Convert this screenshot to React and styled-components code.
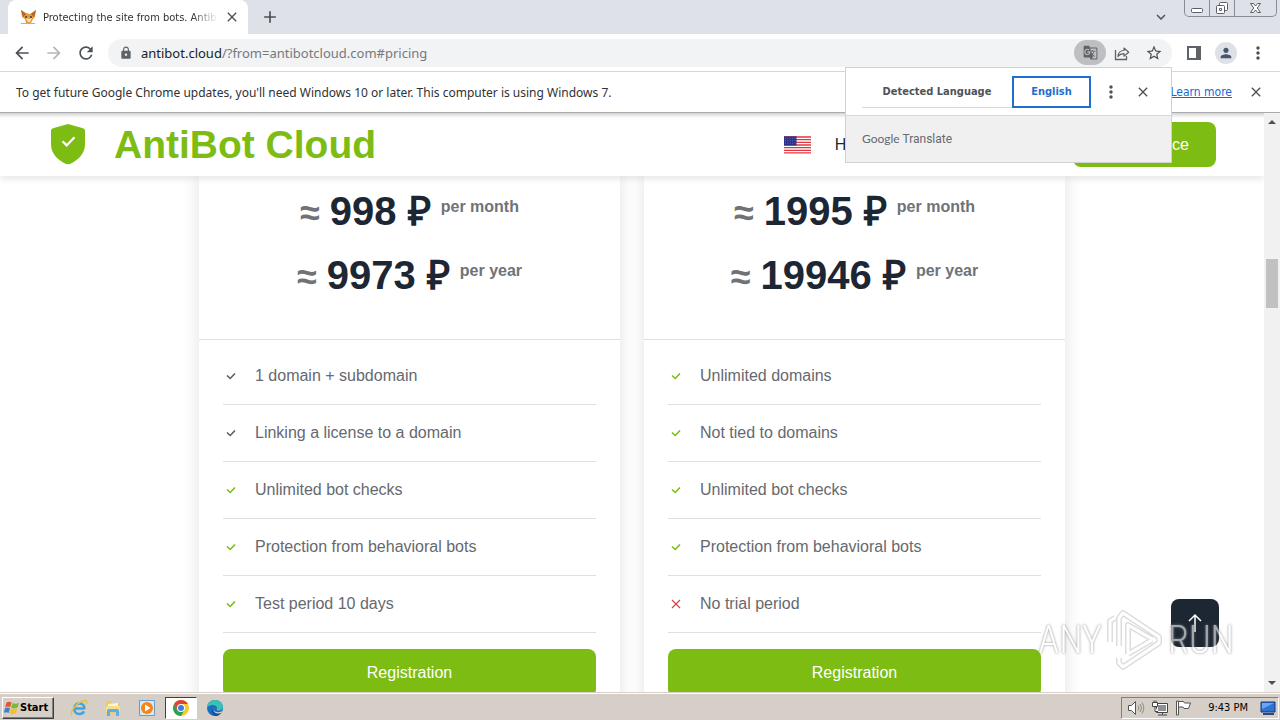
import React from 'react';

import styled, { createGlobalStyle } from 'styled-components';
import {
    MdArrowBack,
    MdArrowForward,
    MdRefresh,
    MdLock,
    MdGTranslate,
    MdStarBorder,
    MdClose,
    MdMoreVert,
    MdPerson,
    MdAdd,
    MdKeyboardArrowDown,
} from 'react-icons/md';

const plans = [
    {
        id: 'single',
        prices: [
            { amount: '998 ₽', period: 'per month' },
            { amount: '9973 ₽', period: 'per year' },
        ],
        features: [
            { text: '1 domain + subdomain', mark: 'plain' },
            { text: 'Linking a license to a domain', mark: 'plain' },
            { text: 'Unlimited bot checks', mark: 'yes' },
            { text: 'Protection from behavioral bots', mark: 'yes' },
            { text: 'Test period 10 days', mark: 'yes' },
        ],
    },
    {
        id: 'unlimited',
        prices: [
            { amount: '1995 ₽', period: 'per month' },
            { amount: '19946 ₽', period: 'per year' },
        ],
        features: [
            { text: 'Unlimited domains', mark: 'yes' },
            { text: 'Not tied to domains', mark: 'yes' },
            { text: 'Unlimited bot checks', mark: 'yes' },
            { text: 'Protection from behavioral bots', mark: 'yes' },
            { text: 'No trial period', mark: 'no' },
        ],
    },
];

const markColors = { plain: '#5a5d61', yes: '#7dbc12', no: '#d2433c' };

const FoxIcon = () => (
    <svg width='17' height='16' viewBox='0 0 17 16' aria-hidden='true'>
        <path d='M1 1l5 3 4 1 6-4-1 7-2 2-2 4H6l-1-4-3-2z' fill='#e59a3a' />
        <path d='M1 1l5 4-3 3zM16 1l-5 4 3 3z' fill='#b5642a' />
        <path d='M6 9l2 4h2l2-4-3 1z' fill='#f6e3cf' />
        <circle cx='6' cy='8' r='1' fill='#3c3c54' />
        <circle cx='11' cy='8' r='1' fill='#3c3c54' />
        <path d='M1 14h14v1H1z' fill='#b9a6c9' />
    </svg>
);

const ShareIcon = () => (
    <svg width='16' height='16' viewBox='0 0 16 16' fill='none' stroke='#5f6368' aria-hidden='true'>
        <path d='M1.500 5v9.500h11V11' strokeWidth='1.300' />
        <path d='M4 11.500c.3-4 2.500-6 6-6V3l4.700 4.200L10 11.200V8.700c-2.700 0-4.500.8-6 2.800z' strokeWidth='1.200' strokeLinejoin='round' />
    </svg>
);

const PanelIcon = () => (
    <svg width='14' height='14' viewBox='0 0 14 14' aria-hidden='true'>
        <path d='M1 1h12v12H1z' fill='#fff' stroke='#5f6368' strokeWidth='2' />
        <path d='M9 1h4v12H9z' fill='#5f6368' />
    </svg>
);

const ShieldIcon = () => (
    <svg width='34' height='41' viewBox='0 0 34 41' aria-hidden='true'>
        <path d='M17 0l15 4.300c1.300.4 2 1.200 2 2.600V20c0 9-5.500 14.500-13 19-2.800 1.700-5.200 1.700-8 0C5.500 34.500 0 29 0 20V6.900c0-1.400.7-2.200 2-2.600z' fill='#7dbc12' />
        <path d='M11.500 17.200l4.200 4.200 7.800-8.200' fill='none' stroke='#fff' strokeWidth='2.200' />
    </svg>
);

const UsFlag = () => (
    <svg width='27' height='18' viewBox='0 0 28 18' aria-label='English'>
        <path d='M0 0h28v18H0z' fill='#fff' />
        <path d='M0 .7h28M0 3.500h28M0 6.200h28M0 9h28M0 11.700h28M0 14.500h28M0 17.200h28' stroke='#e2343f' strokeWidth='1.400' />
        <path d='M0 0h13v9.500H0z' fill='#2b2f86' />
        <path d='M1 2h11M1 4.500h11M1 7h11' stroke='#7478c0' strokeDasharray='1 1.500' />
    </svg>
);

const FeatureMark = ({ mark }) => (
    <svg width='16' height='16' viewBox='0 0 16 16' fill='none' stroke={markColors[mark]} aria-hidden='true'>
        {mark === 'no' ? (
            <path d='M4 4l8 8M12 4l-8 8' strokeWidth='1.100' />
        ) : (
            <path d='M4 7.500L7.200 10.500 12 5.500' strokeWidth='1.600' />
        )}
    </svg>
);

const ArrowUp = () => (
    <svg width='16' height='20' viewBox='0 0 16 20' fill='none' stroke='#fff' strokeWidth='1.500' aria-hidden='true'>
        <path d='M8 19V2M2 8l6-6 6 6' />
    </svg>
);

const WindowsLogo = () => (
    <svg width='16' height='16' viewBox='0 0 16 16' aria-hidden='true'>
        <path d='M2.500 2.500c2-1.200 3.500-1 5 0L6.200 7.300c-1.600-1-3.200-1-5 0z' fill='#e4572a' />
        <path d='M8.400 3c2 1 4 1 6.600-.3L13.700 7.500c-2.300 1.100-4.500 1.200-6.600.2z' fill='#7cb93a' />
        <path d='M1 8.200c1.800-1 3.400-1 5 0L4.700 13c-1.600-1-3.200-1-5 0z' fill='#3f80d0' />
        <path d='M6.900 8.600c2.200 1 4.300.9 6.600-.2l-1.300 4.900c-2.300 1.100-4.500 1.200-6.600.2z' fill='#f6be2c' />
    </svg>
);

const IeIcon = () => (
    <svg width='18' height='18' viewBox='0 0 18 18' fill='none' aria-hidden='true'>
        <path d='M14.500 9.500H5M14.500 10c0-3.500-2.200-5.600-5-5.600A5.300 5.300 0 0 0 4.200 9.800C4.200 13 6.500 15 9.400 15c2 0 3.700-.9 4.600-2.600' stroke='#3fa4e0' strokeWidth='2.600' />
        <path d='M2 16.500C-1 13 7 3 14.500 1.500c3-.4 2.500 2 1.500 3.500' stroke='#ecc03c' strokeWidth='1.400' />
    </svg>
);

const FolderIcon = () => (
    <svg width='18' height='18' viewBox='0 0 18 18' aria-hidden='true'>
        <path d='M2 2h5l1 2h8v10H2z' fill='#ecca6a' />
        <path d='M4 5l10-1v6H4z' fill='#fff6cf' />
        <path d='M2 7h14v6H2z' fill='#f5dc90' />
        <path d='M3 17v-5c0-1 .5-2 2-2h8c1.500 0 2 1 2 2v5h-3v-4H6v4z' fill='#5fb0e0' />
    </svg>
);

const PlayerIcon = () => (
    <svg width='18' height='18' viewBox='0 0 18 18' aria-hidden='true'>
        <path d='M1.500 1.500h15v15h-15z' fill='#d6e9f7' stroke='#6c9cc4' />
        <circle cx='9' cy='9' r='6' fill='#f0861c' />
        <path d='M7 5.500L12.500 9 7 12.500z' fill='#fff' />
    </svg>
);

const ChromeIcon = () => (
    <svg width='16' height='16' viewBox='0 0 16 16' aria-hidden='true'>
        <circle cx='8' cy='8' r='8' fill='#f7c92c' />
        <path d='M1.100 4A8 8 0 0 0 8 16l3.500-6L8 8 4.500 10z' fill='#2c9f55' />
        <path d='M1.100 4A8 8 0 0 1 14.900 4H8L4.500 10z' fill='#dc4437' />
        <circle cx='8' cy='8' r='4' fill='#fff' />
        <circle cx='8' cy='8' r='3' fill='#3c7de0' />
    </svg>
);

const EdgeIcon = () => (
    <svg width='18' height='18' viewBox='0 0 18 18' aria-hidden='true'>
        <circle cx='9' cy='9' r='8' fill='#1b6fc2' />
        <path d='M1 8.500C1.500 3.500 5 1 9 1c5 0 8 3.500 8 6.500 0 3-2.500 4-4.500 4-1.500 0-2.500-.5-1.500-1.500C12 8 9 5.500 6 6 3.500 6.300 1.500 7.500 1 8.500z' fill='#3cc0b4' />
        <path d='M6.500 9c-.5 4 3 6.500 8.500 4.700C13 16.500 11 17 9.500 17 6 16 4.500 12 6.500 9z' fill='#124f9c' />
        <path d='M8.500 8.500c-1.500 1.800-.5 5 4 4.700 1.500 0 3-.7 3.500-1.200l-.5 1.700c-5 2-9.500-.5-7-5.200z' fill='#d6cfc7' />
    </svg>
);

const SpeakerIcon = () => (
    <svg width='18' height='16' viewBox='0 0 18 16' fill='none' stroke='#555' aria-hidden='true'>
        <path d='M1.500 5.500h3l4-4v13l-4-4h-3z' fill='#fff' />
        <path d='M11 5.500c1 1.500 1 3.500 0 5M13 4c1.700 2.500 1.700 5.500 0 8M15 2.500c2.300 3.500 2.300 7.500 0 11' stroke='#888' />
    </svg>
);

const NetworkIcon = () => (
    <svg width='16' height='16' viewBox='0 0 16 16' fill='none' stroke='#444' aria-hidden='true'>
        <path d='M4.500 3.500h11v9h-11z' fill='#fff' />
        <path d='M6 5h8v6H6z' fill='#8d9097' stroke='none' />
        <path d='M10.500 12.500v2M6 15h9' />
        <path d='M.5 2.500h5v4h-5zM2 2.500V.5M4 2.500V.5M3 6.500v5h3' fill='#fff' />
    </svg>
);

const TrayFlag = () => (
    <svg width='17' height='16' viewBox='0 0 17 16' fill='#fff' stroke='#555' aria-hidden='true'>
        <path d='M3.500 1.500h5l1 1.500h6l-2 5.500H9L8 7H3.500z' />
        <path d='M1.500 1h2v14h-2z' />
    </svg>
);

const DesktopIcon = () => (
    <svg width='16' height='16' viewBox='0 0 16 16' aria-hidden='true'>
        <path d='M1 2h14v10H1z' fill='#2d72d4' stroke='#18396e' />
        <path d='M2 3h12L2 9z' fill='#6aa7f0' />
        <path d='M3 13h11v2H3z' fill='#2b4a7c' />
    </svg>
);

const playPath = 'M13 38V10l4-5 36 24v6L17 59l-4-4v-5M4 34V13l5-3M22 46V17l24 14M22 46l24-14';

const App = () => {
    return (
        <Desktop>
            <GlobalStyle />
            <TabStrip>
                <Tab>
                    <FoxIcon />
                    <TabTitle>Protecting the site from bots. Antibot</TabTitle>
                    <IconButton aria-label='Close tab' $size={16}><MdClose /></IconButton>
                </Tab>
                <IconButton aria-label='New tab' $size={20}><MdAdd /></IconButton>
                <WindowControls>
                    <IconButton aria-label='Search tabs' $size={18}><MdKeyboardArrowDown /></IconButton>
                    <WindowButtons>
                        <WindowButton aria-label='Minimize' $width={24}>
                            <svg width='14' height='12' viewBox='0 0 14 12' fill='#fff' stroke='#5b5e66'>
                                <rect x='1.500' y='6.500' width='11' height='4' rx='1' />
                            </svg>
                        </WindowButton>
                        <WindowButton aria-label='Restore' $width={25}>
                            <svg width='14' height='13' viewBox='0 0 14 13' fill='#fff' stroke='#5b5e66'>
                                <rect x='4.500' y='.5' width='8' height='8' rx='1' />
                                <rect x='1.500' y='3.500' width='8' height='8' rx='1' />
                                <path d='M4.500 6.500h2v2h-2z' />
                            </svg>
                        </WindowButton>
                        <WindowButton aria-label='Close' $width={42}>
                            <svg width='13' height='12' viewBox='0 0 13 12' fill='#fff' stroke='#5b5e66'>
                                <path d='M1.500 1.500h3l2 2.500 2-2.500h3L8.300 6l3.200 4.500h-3l-2-2.500-2 2.500h-3L4.700 6z' />
                            </svg>
                        </WindowButton>
                    </WindowButtons>
                </WindowControls>
            </TabStrip>
            <Toolbar>
                <IconButton aria-label='Back' $size={20}><MdArrowBack /></IconButton>
                <IconButton aria-label='Forward' $size={20} $faded><MdArrowForward /></IconButton>
                <IconButton aria-label='Reload' $size={20}><MdRefresh /></IconButton>
                <Omnibox>
                    <MdLock size={14} />
                    <Address href='#pricing'>
                        <b>antibot.cloud</b>/?from=antibotcloud.com#pricing
                    </Address>
                    <TranslateButton aria-label='Translate this page'><MdGTranslate /></TranslateButton>
                    <IconButton aria-label='Share' $size={16}><ShareIcon /></IconButton>
                    <IconButton aria-label='Bookmark' $size={18}><MdStarBorder /></IconButton>
                </Omnibox>
                <ToolbarEnd>
                    <IconButton aria-label='Side panel' $size={20}><PanelIcon /></IconButton>
                    <Avatar aria-label='Profile'><MdPerson /></Avatar>
                    <IconButton aria-label='Menu' $size={20}><MdMoreVert /></IconButton>
                </ToolbarEnd>
            </Toolbar>
            <InfoBar>
                <p>To get future Google Chrome updates, you'll need Windows 10 or later. This computer is using Windows 7.</p>
                <a href='#learn'>Learn more</a>
                <IconButton aria-label='Dismiss' $size={16}><MdClose /></IconButton>
            </InfoBar>

            <TranslatePopup role='dialog' aria-label='Google Translate'>
                <LanguageRow>
                    <LanguageTabs>
                        <LanguageTab>Detected Language</LanguageTab>
                        <LanguageTab $active>English</LanguageTab>
                    </LanguageTabs>
                    <IconButton aria-label='Options' $size={20}><MdMoreVert /></IconButton>
                    <IconButton aria-label='Close' $size={16}><MdClose /></IconButton>
                </LanguageRow>
                <TranslateBrand><span>Google</span> Translate</TranslateBrand>
            </TranslatePopup>

            <Viewport>
                <Site>
                    <SiteHeader>
                        <Brand href='#home'>
                            <ShieldIcon />
                            AntiBot Cloud
                        </Brand>
                        <SiteNav>
                            <UsFlag />
                            <NavLinks>
                                <a href='#home'>Home</a>
                            </NavLinks>
                            <OfficeLink href='#office'>Private office</OfficeLink>
                        </SiteNav>
                    </SiteHeader>
                    <Plans>
                        {plans.map(({ id, prices, features }) => (
                            <PlanCard key={id}>
                                <Prices>
                                    {prices.map(({ amount, period }) => (
                                        <Price key={period}>
                                            <small>≈</small>
                                            <span>{amount}</span>
                                            <sup>{period}</sup>
                                        </Price>
                                    ))}
                                </Prices>
                                <Features>
                                    {features.map(({ text, mark }) => (
                                        <Feature key={text}>
                                            <FeatureMark mark={mark} />
                                            {text}
                                        </Feature>
                                    ))}
                                </Features>
                                <RegisterLink href='#register'>Registration</RegisterLink>
                            </PlanCard>
                        ))}
                    </Plans>
                    <ScrollTop type='button' aria-label='Back to top'><ArrowUp /></ScrollTop>
                </Site>
                <Scrollbar aria-hidden='true'>
                    <svg width='8' height='4' viewBox='0 0 8 4'><path d='M0 4l4-4 4 4z' fill='#505050' /></svg>
                    <ScrollTrack><ScrollThumb /></ScrollTrack>
                    <svg width='8' height='4' viewBox='0 0 8 4'><path d='M0 0l4 4 4-4z' fill='#505050' /></svg>
                </Scrollbar>
                <Watermark>
                    <span>ANY</span>
                    <svg width='58' height='64' viewBox='0 0 58 64' fill='none' strokeLinejoin='round'>
                        <path d={playPath} stroke='#c8c8c8' strokeWidth='6' />
                        <path d={playPath} stroke='#fff' strokeWidth='3' />
                    </svg>
                    <span>RUN</span>
                </Watermark>
            </Viewport>

            <Taskbar>
                <StartButton type='button'>
                    <WindowsLogo />
                    Start
                </StartButton>
                <QuickLaunch>
                    <TaskButton aria-label='Internet Explorer'><IeIcon /></TaskButton>
                    <TaskButton aria-label='Explorer'><FolderIcon /></TaskButton>
                    <TaskButton aria-label='Media Player'><PlayerIcon /></TaskButton>
                    <TaskButton aria-label='Chrome' $active><ChromeIcon /></TaskButton>
                    <TaskButton aria-label='Edge'><EdgeIcon /></TaskButton>
                </QuickLaunch>
                <Tray>
                    <SpeakerIcon />
                    <NetworkIcon />
                    <TrayFlag />
                    <time>9:43 PM</time>
                    <DesktopIcon />
                </Tray>
            </Taskbar>
        </Desktop>
    );
};

const GlobalStyle = createGlobalStyle`
    * {
        box-sizing: border-box;
    }

    body {
        margin: 0;
        overflow: hidden;
        background: #fff;
        font-family: 'DejaVu Sans Condensed', 'Noto Sans', sans-serif;
        font-size: 12px;
        color: #303134;
    }

    p, h2, ul {
        margin: 0;
        padding: 0;
    }

    button {
        border: 0;
        padding: 0;
        background: transparent;
        font-family: inherit;
    }

    svg {
        display: block;
        flex-shrink: 0;
    }
`;

const Desktop = styled.div`
    position: relative;
    display: flex;
    flex-direction: column;
    height: 100vh;
`;

const IconButton = styled.button`
    display: flex;
    align-items: center;
    justify-content: center;
    flex-shrink: 0;
    min-width: ${({ $size }) => $size}px;
    font-size: ${({ $size }) => $size}px;
    color: ${({ $faded }) => ($faded ? '#b4b7bb' : '#4d5156')};
`;

const TabStrip = styled.div`
    display: flex;
    align-items: center;
    gap: 12px;
    height: 34px;
    padding-left: 8px;
    background: #dee1e8;
`;

const Tab = styled.div`
    display: flex;
    align-items: center;
    gap: 6px;
    width: 240px;
    height: 34px;
    padding: 0 8px 0 12px;
    border-radius: 8px 8px 0 0;
    background: #fff;
`;

const TabTitle = styled.span`
    flex: 1;
    overflow: hidden;
    white-space: nowrap;
    font-size: 11px;
    mask-image: linear-gradient(90deg, #000 85%, transparent);
`;

const WindowControls = styled.div`
    display: flex;
    align-items: center;
    align-self: stretch;
    gap: 14px;
    margin-left: auto;
    padding-right: 3px;
`;

const WindowButtons = styled.div`
    display: flex;
    align-self: flex-start;
    border: 1px solid #888c96;
    border-top: 0;
    border-radius: 0 0 5px 5px;
`;

const WindowButton = styled.button`
    display: flex;
    align-items: center;
    justify-content: center;
    width: ${({ $width }) => $width}px;
    height: 16px;

    & + & {
        border-left: 1px solid #888c96;
    }
`;

const Toolbar = styled.div`
    display: flex;
    align-items: center;
    gap: 12px;
    height: 38px;
    padding: 0 12px;
    border-bottom: 1px solid #d5d7da;
    background: #fff;
`;

const Omnibox = styled.div`
    display: flex;
    align-items: center;
    gap: 15px;
    flex: 1;
    height: 28px;
    padding: 0 9px 0 11px;
    border-radius: 14px;
    background: #f1f3f4;
    font-size: 13px;
    color: #5f6368;
`;

const Address = styled.a`
    flex: 1;
    margin-left: -7px;
    font-family: 'Noto Sans', sans-serif;
    color: #75797e;
    text-decoration: none;

    b {
        font-weight: 400;
        color: #202124;
    }
`;

const TranslateButton = styled.button`
    display: flex;
    align-items: center;
    justify-content: center;
    width: 32px;
    height: 25px;
    margin-right: -7px;
    border-radius: 13px;
    background: #bdbfc1;
    font-size: 15px;
    color: #5f6368;
`;

const ToolbarEnd = styled.div`
    display: flex;
    align-items: center;
    gap: 11px;
`;

const Avatar = styled.button`
    display: flex;
    align-items: center;
    justify-content: center;
    width: 22px;
    height: 22px;
    border-radius: 50%;
    background: #dee1e6;
    font-size: 16px;
    color: #4a5670;
`;

const InfoBar = styled.div`
    display: flex;
    align-items: center;
    gap: 16px;
    height: 41px;
    padding: 0 16px;
    border-bottom: 1px solid #a9abad;

    p {
        flex: 1;
        font-family: 'Noto Sans', sans-serif;
    }

    a {
        color: #1967d2;
    }
`;

const TranslatePopup = styled.div`
    position: absolute;
    z-index: 5;
    top: 67px;
    right: 108px;
    width: 327px;
    border: 1px solid #d0d1d3;
    background: #fff;
`;

const LanguageRow = styled.div`
    display: flex;
    align-items: center;
    gap: 14px;
    height: 48px;
    padding: 0 16px;
    border-bottom: 1px solid #d6d7d9;
`;

const LanguageTabs = styled.div`
    display: flex;
    width: 229px;
    margin-right: -4px;
`;

const LanguageTab = styled.button`
    flex: ${({ $active }) => ($active ? '0 0 79px' : '1')};
    height: 32px;
    border: ${({ $active }) => ($active ? '2px solid #1f6fce' : '0')};
    border-bottom: ${({ $active }) => ($active ? '2px solid #1f6fce' : '1px solid #d6d7d9')};
    font-size: 11px;
    font-weight: 700;
    color: ${({ $active }) => ($active ? '#1f6fce' : '#505255')};
`;

const TranslateBrand = styled.div`
    height: 46px;
    padding: 0 16px;
    background: #f0f0f0;
    font-family: Roboto, sans-serif;
    font-size: 12px;
    line-height: 46px;
    color: #66696d;

    span {
        font-family: Lato, sans-serif;
    }
`;

const Viewport = styled.div`
    position: relative;
    display: flex;
    flex: 1;
    min-height: 0;
    font-family: 'Liberation Sans', Arial, sans-serif;
    font-size: 16px;
`;

const Site = styled.div`
    position: relative;
    flex: 1;
    overflow: hidden;
    color: #66696e;
`;

const SiteHeader = styled.header`
    position: relative;
    z-index: 1;
    display: flex;
    align-items: center;
    justify-content: space-between;
    height: 63px;
    padding: 0 48px 0 51px;
    background: linear-gradient(#d4d4d4, #fff 5px);
    box-shadow: 0 2px 8px rgba(0, 0, 0, 0.12);
`;

const Brand = styled.a`
    display: flex;
    align-items: center;
    gap: 29px;
    font-size: 39px;
    font-weight: 700;
    color: #7dbc12;
    text-decoration: none;
`;

const SiteNav = styled.nav`
    display: flex;
    align-items: center;
    gap: 24px;
`;

const NavLinks = styled.div`
    width: 214px;

    a {
        color: #1d2733;
        text-decoration: none;
    }
`;

const OfficeLink = styled.a`
    padding: 0 27px 0 24px;
    border-radius: 8px;
    background: #7dbc12;
    line-height: 45px;
    color: #fff;
    text-decoration: none;
`;

const Plans = styled.main`
    display: grid;
    grid-template-columns: 1fr 1fr;
    gap: 24px;
    max-width: 866px;
    margin: 0 auto;
`;

const PlanCard = styled.section`
    display: flex;
    flex-direction: column;
    padding-bottom: 24px;
    background: #fff;
    box-shadow: 0 0 16px rgba(0, 0, 0, 0.12);
`;

const Prices = styled.div`
    display: flex;
    flex-direction: column;
    align-items: center;
    gap: 16px;
    padding: 11px 24px 40px;
    border-bottom: 1px solid #dee0e2;
`;

const Price = styled.h2`
    display: flex;
    align-items: baseline;
    gap: 10px;
    height: 48px;
    font-size: 40px;
    line-height: 48px;
    color: #1d2733;

    small {
        font-size: 36px;
        color: #6f7378;
    }

    sup {
        align-self: flex-start;
        font-size: 16px;
        line-height: 40px;
        color: #6f7378;
    }
`;

const Features = styled.ul`
    padding: 8px 24px 16px;
    list-style: none;
`;

const Feature = styled.li`
    display: flex;
    align-items: center;
    gap: 16px;
    height: 57px;
    border-bottom: 1px solid #dee0e2;
`;

const RegisterLink = styled.a`
    margin: 0 24px;
    border-radius: 8px;
    background: #7dbc12;
    line-height: 48px;
    text-align: center;
    color: #fff;
    text-decoration: none;
`;

const ScrollTop = styled.button`
    position: absolute;
    right: 45px;
    bottom: 45px;
    display: flex;
    align-items: center;
    justify-content: center;
    width: 48px;
    height: 48px;
    border-radius: 8px;
    background: #1d2733;
`;

const Scrollbar = styled.div`
    display: flex;
    flex-direction: column;
    align-items: center;
    width: 16px;
    padding: 7px 0;
    background: #f1f1f1;
`;

const ScrollTrack = styled.div`
    flex: 1;
    padding-top: 135px;
`;

const ScrollThumb = styled.div`
    width: 12px;
    height: 49px;
    background: #c1c1c1;
`;

const Watermark = styled.div`
    position: absolute;
    right: 46px;
    bottom: 20px;
    display: flex;
    align-items: center;
    gap: 4px;
    font-family: 'Roboto Condensed', Roboto, sans-serif;
    font-size: 38px;
    font-weight: 300;
    color: #fff;
    text-shadow: 0 0 3px #777, 0 0 2px #999;
    opacity: 0.6;
    pointer-events: none;
`;

const Taskbar = styled.footer`
    display: flex;
    align-items: center;
    height: 28px;
    padding: 2px 1px 0 2px;
    border-top: 1px solid #d6cfc7;
    box-shadow: inset 0 1px 0 #fff;
    background: #d6cfc7;
`;

const StartButton = styled.button`
    display: flex;
    align-items: center;
    width: 52px;
    height: 22px;
    padding-left: 1px;
    border: 1px solid;
    border-color: #fff #404040 #404040 #fff;
    box-shadow: inset -1px -1px 0 #808080;
    font-size: 11px;
    font-weight: 700;
    color: #000;
`;

const QuickLaunch = styled.div`
    display: flex;
    gap: 2px;
    margin-left: 9px;
`;

const TaskButton = styled.button`
    display: flex;
    align-items: center;
    justify-content: center;
    width: 32px;
    height: 22px;
    border: 1px solid;
    border-color: ${({ $active }) => ($active ? '#404040 #fff #fff #404040' : 'transparent')};
    background: ${({ $active }) => ($active ? '#fff' : 'transparent')};
`;

const Tray = styled.div`
    display: flex;
    align-items: center;
    gap: 7px;
    height: 22px;
    margin-left: auto;
    padding: 0 2px 0 5px;
    border: 1px solid;
    border-color: #808080 #fff #fff #808080;
    font-size: 11px;
    color: #000;

    time {
        margin: 0 5px 0 9px;
    }
`;

export default App;
